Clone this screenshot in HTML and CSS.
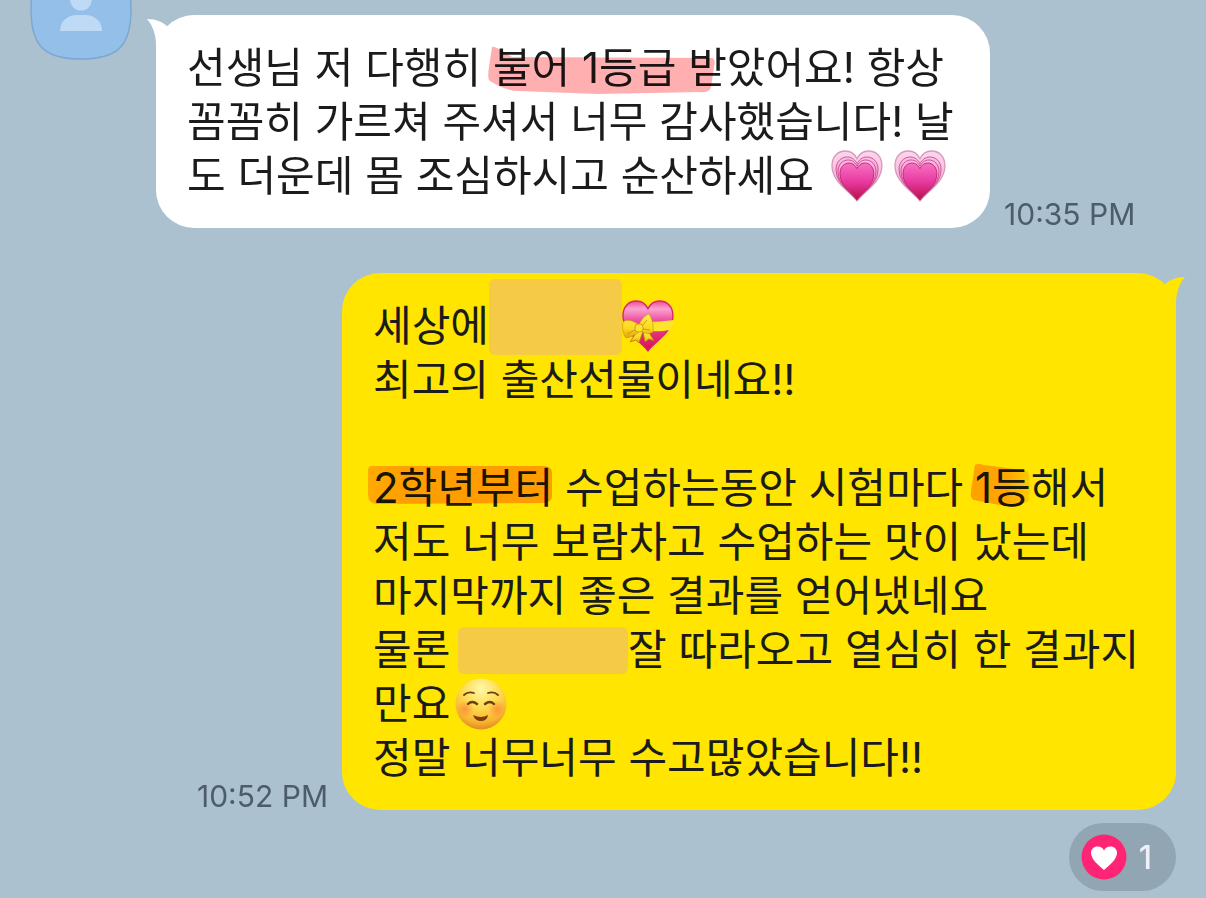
FILE: index.html
```html
<!DOCTYPE html>
<html lang="ko">

<head>
    <meta charset="UTF-8">
    <meta name="viewport" content="width=device-width, initial-scale=1.0">
    <title>Chat</title>
    <link rel="stylesheet" href="styles.css">
</head>

<body>
    <svg class="defs" aria-hidden="true">
        <defs>
            <linearGradient id="pinkOuter" x1="0" y1="0" x2="0" y2="1">
                <stop offset="0" stop-color="#fcd6ee" />
                <stop offset="0.6" stop-color="#f9b4dc" />
                <stop offset="1" stop-color="#cf5f86" />
            </linearGradient>
            <linearGradient id="pinkMid" x1="0" y1="0" x2="0" y2="1">
                <stop offset="0" stop-color="#fcbfe6" />
                <stop offset="0.6" stop-color="#f48ac8" />
                <stop offset="1" stop-color="#c8386f" />
            </linearGradient>
            <linearGradient id="pinkInner" x1="0" y1="0" x2="0" y2="1">
                <stop offset="0" stop-color="#f772c2" />
                <stop offset="0.5" stop-color="#e93aa2" />
                <stop offset="1" stop-color="#b80f45" />
            </linearGradient>
            <linearGradient id="giftHeart" x1="0" y1="0" x2="0" y2="1">
                <stop offset="0" stop-color="#f04a98" />
                <stop offset="0.16" stop-color="#f9a3d0" />
                <stop offset="0.4" stop-color="#ee4a9c" />
                <stop offset="1" stop-color="#d80d50" />
            </linearGradient>
            <linearGradient id="ribbon" x1="0" y1="0" x2="0" y2="1">
                <stop offset="0" stop-color="#fff04a" />
                <stop offset="0.6" stop-color="#fbd81f" />
                <stop offset="1" stop-color="#e0a312" />
            </linearGradient>
            <radialGradient id="face" cx="0.5" cy="0.2" r="0.82">
                <stop offset="0" stop-color="#fff7a8" />
                <stop offset="0.45" stop-color="#fedb50" />
                <stop offset="0.8" stop-color="#f7b42f" />
                <stop offset="1" stop-color="#dc8420" />
            </radialGradient>
            <radialGradient id="blush">
                <stop offset="0" stop-color="#ff7a3b" stop-opacity="0.65" />
                <stop offset="1" stop-color="#ff7a3b" stop-opacity="0" />
            </radialGradient>
            <linearGradient id="fade" x1="0" y1="0" x2="1" y2="0">
                <stop offset="0" stop-color="#ffb400" />
                <stop offset="0.6" stop-color="#ffb800" />
                <stop offset="1" stop-color="#ffe400" />
            </linearGradient>
            <linearGradient id="orange" x1="0" y1="0" x2="1" y2="0">
                <stop offset="0" stop-color="#ffbe05" />
                <stop offset="0.2" stop-color="#ffb000" />
                <stop offset="1" stop-color="#ffae00" />
            </linearGradient>
            <path id="heartShape" d="M26 52 C19 42 0 33 0 15 C0 6 6 0 14 0 C20 0 24 4 26 8 C28 4 32 0 38 0 C46 0 52 6 52 15 C52 33 33 42 26 52 Z" />
            <symbol id="growingHeart" viewBox="0 0 52 52">
                <use href="#heartShape" fill="url(#pinkOuter)" stroke="#d69bb8" stroke-width="1.4" transform="translate(1 1) scale(0.96)" />
                <use href="#heartShape" fill="url(#pinkMid)" stroke="#cf5496" stroke-width="1.2" transform="translate(5 7) scale(0.81 0.83)" />
                <use href="#heartShape" fill="url(#pinkMid)" stroke="#c9458c" stroke-width="1.2" transform="translate(7 10) scale(0.73 0.77)" />
                <use href="#heartShape" fill="url(#pinkInner)" stroke="#b92a70" stroke-width="1.4" transform="translate(9 13) scale(0.65 0.71)" />
            </symbol>
        </defs>
    </svg>

    <main class="chat">
        <section class="row received">
            <svg class="avatar" viewBox="0 0 102 102" role="img" aria-label="profile">
                <path d="M51 1 C88 1 101 14 101 51 C101 88 88 101 51 101 C14 101 1 88 1 51 C1 14 14 1 51 1 Z" fill="#93bfe8" stroke="#7ea8d0" stroke-width="1.5" />
                <ellipse cx="51" cy="41" rx="11" ry="11.5" fill="#bfdaf4" />
                <path d="M30 73 C30 62 39 57 46 57 H56 C63 57 72 62 72 73 Z" fill="#bfdaf4" />
            </svg>
            <div class="bubble">
                <svg class="tail" viewBox="0 0 48 44" aria-hidden="true">
                    <path d="M0 4 C9 4 16 7 21 12 L40 20 L10 44 H9 V30 C9 20 6 11 0 4 Z" />
                </svg>
                <p>선생님 저 다행히 <mark>불어 1등급<svg class="stroke pink" viewBox="0 0 228 54" aria-hidden="true"><path d="M4 6 Q6 5 14 10 L24 16 L224 17 Q228 18 226 26 L223 46 Q222 52 212 51 L110 53 L30 50 Q18 50 2 40 Q-1 38 1 26 Z" /></svg></mark> 받았어요! 항상<br>
                    꼼꼼히 가르쳐 주셔서 너무 감사했습니다! 날<br>
                    도 더운데 몸 조심하시고 순산하세요 <svg class="emoji" role="img" aria-label="growing heart"><use href="#growingHeart" /></svg><svg class="emoji second" role="img" aria-label="growing heart"><use href="#growingHeart" /></svg></p>
            </div>
            <time>10:35 PM</time>
        </section>

        <section class="row sent">
            <time>10:52 PM</time>
            <div class="bubble">
                <svg class="tail" viewBox="0 0 48 44" aria-hidden="true">
                    <path d="M0 4 C9 4 16 7 21 12 L40 20 L10 44 H9 V30 C9 20 6 11 0 4 Z" />
                </svg>
                <p>세상에<span class="cover name"></span><svg class="emoji" viewBox="0 0 52 52" role="img" aria-label="heart with ribbon">
                        <use href="#heartShape" fill="url(#giftHeart)" stroke="#d92673" stroke-width="1.5" transform="translate(1 1) scale(0.96)" />
                        <path d="M24 22 C34 22 43 21 52 20 C51 25 50 28 48 30 C38 32 32 31 24 31 Z" fill="#ffe42a" />
                        <path d="M16 30 L8 42 L14 40 L17 43 L21 31 Z M21 31 L23 42 L27 39 L32 41 L25 29 Z" fill="url(#ribbon)" stroke="#b9790b" stroke-width="0.8" />
                        <path d="M17 25 C11 20 4 19 1 22 C0 28 1 35 4 38 C10 37 15 34 18 31 C24 34 28 34 31 32 C32 26 30 18 27 14 C23 15 19 20 17 25 Z" fill="url(#ribbon)" stroke="#c98f10" stroke-width="0.6" />
                        <path d="M5 34 L13 30 M25 20 L20 26 M28 30 L21 29" fill="none" stroke="#cf9a15" stroke-width="1" />
                        <rect x="13" y="24" width="8" height="8" rx="3" fill="#ffe22c" stroke="#c98f10" stroke-width="0.8" />
                    </svg><br>
                    최고의 출산선물이네요!!<br>
                    <br>
                    <mark>2학년부터<svg class="stroke orange" viewBox="0 0 184 54" aria-hidden="true"><path d="M3 5 H175 Q184 5 184 12 V35 Q184 42 174 42 L8 43 Q0 42 0 34 V10 Q0 5 3 5 Z" fill="url(#orange)" /></svg></mark> 수업하는동안 시험마다 <mark>1등<svg class="stroke short" viewBox="0 0 62 54" aria-hidden="true"><path d="M5 4 Q8 2 14 4 L30 6 L58 10 Q62 24 59 40 L44 46 L24 43 L4 39 Q0 38 1 30 Z" fill="url(#fade)" /></svg></mark>해서<br>
                    저도 너무 보람차고 수업하는 맛이 났는데<br>
                    마지막까지 좋은 결과를 얻어냈네요<br>
                    물론 <span class="cover student"></span>잘 따라오고 열심히 한 결과지<br>
                    만요<svg class="emoji" viewBox="0 0 52 52" role="img" aria-label="smiling face">
                        <circle cx="26" cy="26" r="25.5" fill="url(#face)" />
                        <circle cx="10" cy="31" r="9" fill="url(#blush)" />
                        <circle cx="42" cy="31" r="9" fill="url(#blush)" />
                        <g fill="none" stroke="#6d3f0c" stroke-linecap="round">
                            <path d="M9 17 Q13 13 19 15" stroke-width="1.8" />
                            <path d="M33 15 Q39 13 43 17" stroke-width="1.8" />
                            <path d="M13 26 Q17 22 22 26" stroke-width="2.4" />
                            <path d="M30 26 Q35 22 39 26" stroke-width="2.4" />
                        </g>
                        <path d="M18 37 Q26 41 33 37 Q32 43 26 43 Q20 43 18 37 Z" fill="#7c3c0c" />
                    </svg><br>
                    정말 너무너무 수고많았습니다!!</p>
            </div>
        </section>

        <button class="reaction" type="button">
            <svg viewBox="0 0 46 46" aria-hidden="true">
                <circle cx="23" cy="23" r="22.5" fill="#ff2474" />
                <path d="M23 36 C19 32 10 26 10 19 C10 15 13 12.500 16.500 12.500 C19.500 12.500 22 14 23 16.500 C24 14 26.500 12.500 29.500 12.500 C33 12.500 36 15 36 19 C36 26 27 32 23 36 Z" fill="#fff" />
            </svg>
            <span>1</span>
        </button>
    </main>
</body>

</html>
```
FILE: styles.css
```css
* {
    margin: 0;
    padding: 0;
    box-sizing: border-box;
}

body {
    background: #abc1d0;
    font-family: "Inter", "Noto Sans CJK KR", sans-serif;
    color: #1b1b1b;
}

.defs {
    position: absolute;
    width: 0;
    height: 0;
}

.chat {
    display: flex;
    flex-direction: column;
    padding: 15px 30px 8px;
    overflow: hidden;
}

.row {
    display: flex;
    align-items: flex-end;
    margin-bottom: 45px;
}

.sent {
    justify-content: flex-end;
    margin-bottom: 13px;
}

.avatar {
    flex: none;
    align-self: flex-start;
    width: 102px;
    height: 102px;
    margin-top: -57px;
    margin-right: 24px;
}

.bubble {
    position: relative;
    flex: 0 1 834px;
    padding: 26px 10px 25px 31px;
    border-radius: 38px;
    background: #fff;
}

.bubble p {
    font-size: 42px;
    line-height: 54px;
}

.sent .bubble {
    background: #ffe500;
}

.tail {
    position: absolute;
    top: 0;
    left: -9px;
    width: 48px;
    height: 44px;
    fill: #fff;
}

.sent .tail {
    left: auto;
    right: -9px;
    fill: #ffe500;
    transform: scaleX(-1);
}

time {
    flex: none;
    margin: 0 14px;
    font-size: 30px;
    line-height: 28px;
    color: #4c5c69;
    white-space: nowrap;
}

/* highlighter strokes */
mark {
    position: relative;
    display: inline-block;
    background: none;
    color: inherit;
    vertical-align: top;
}

.stroke {
    position: absolute;
    top: 0;
    left: -5px;
    height: 54px;
    mix-blend-mode: multiply;
}

.pink {
    width: 228px;
    fill: #ffafb0;
}

.orange {
    width: 184px;
}

.short {
    width: 62px;
}

.emoji {
    width: 52px;
    height: 52px;
    margin: 1px 0 1px 5px;
    vertical-align: top;
}

.second {
    margin-left: 11px;
}

/* covered names */
.cover {
    display: inline-block;
    border-radius: 6px;
    background: #f5ca47;
    vertical-align: top;
}

.name {
    width: 133px;
    height: 76px;
    margin: -20px -5px -2px 0;
}

.student {
    width: 170px;
    height: 47px;
    margin: 4px 0 3px -4px;
}

.reaction {
    display: flex;
    align-items: center;
    align-self: flex-end;
    gap: 12px;
    height: 68px;
    padding: 0 24px 0 12px;
    border: none;
    border-radius: 34px;
    background: #92a5b3;
    color: #eef1fa;
    font-family: inherit;
    font-size: 32px;
    font-weight: 500;
    cursor: pointer;
}

.reaction svg {
    width: 46px;
    height: 46px;
}
```
